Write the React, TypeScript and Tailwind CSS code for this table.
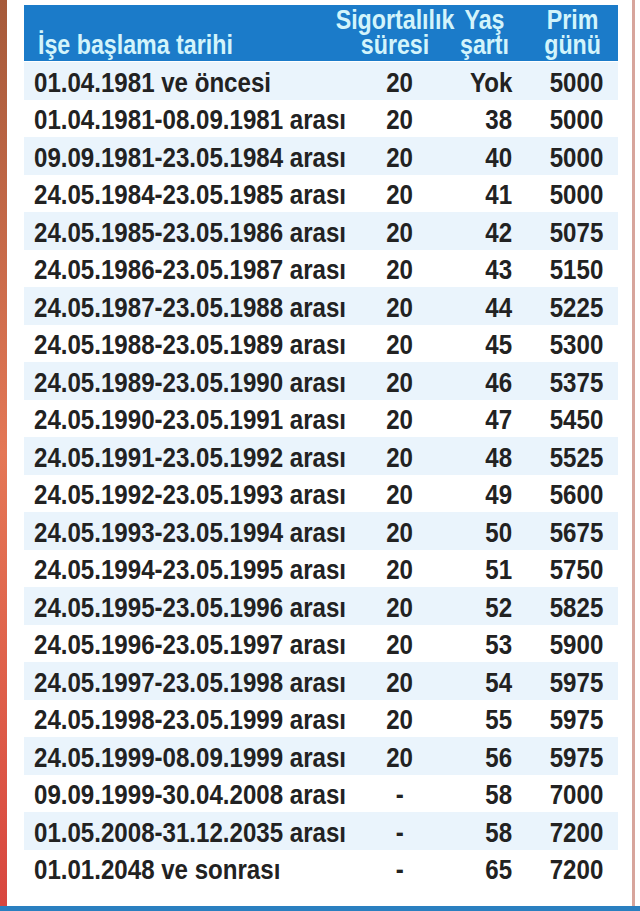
const rows: [string, string, string, string][] = [
  ["01.04.1981 ve öncesi", "20", "Yok", "5000"],
  ["01.04.1981-08.09.1981 arası", "20", "38", "5000"],
  ["09.09.1981-23.05.1984 arası", "20", "40", "5000"],
  ["24.05.1984-23.05.1985 arası", "20", "41", "5000"],
  ["24.05.1985-23.05.1986 arası", "20", "42", "5075"],
  ["24.05.1986-23.05.1987 arası", "20", "43", "5150"],
  ["24.05.1987-23.05.1988 arası", "20", "44", "5225"],
  ["24.05.1988-23.05.1989 arası", "20", "45", "5300"],
  ["24.05.1989-23.05.1990 arası", "20", "46", "5375"],
  ["24.05.1990-23.05.1991 arası", "20", "47", "5450"],
  ["24.05.1991-23.05.1992 arası", "20", "48", "5525"],
  ["24.05.1992-23.05.1993 arası", "20", "49", "5600"],
  ["24.05.1993-23.05.1994 arası", "20", "50", "5675"],
  ["24.05.1994-23.05.1995 arası", "20", "51", "5750"],
  ["24.05.1995-23.05.1996 arası", "20", "52", "5825"],
  ["24.05.1996-23.05.1997 arası", "20", "53", "5900"],
  ["24.05.1997-23.05.1998 arası", "20", "54", "5975"],
  ["24.05.1998-23.05.1999 arası", "20", "55", "5975"],
  ["24.05.1999-08.09.1999 arası", "20", "56", "5975"],
  ["09.09.1999-30.04.2008 arası", "-", "58", "7000"],
  ["01.05.2008-31.12.2035 arası", "-", "58", "7200"],
  ["01.01.2048 ve sonrası", "-", "65", "7200"],
];

const font = {
  fontFamily: '"Liberation Sans", Arial, sans-serif',
};

export default function App() {
  return (
    <div className="flex h-[911px] w-[640px] flex-col bg-white" style={font}>
      <div className="flex flex-1">
        {/* Left edge strip */}
        <div className="w-[7px] bg-gradient-to-b from-[#a55a3a] via-[#e47756] to-[#d8463f]" />

        {/* Table */}
        <div className="ml-[17px] mt-[5px] w-[594px]">
          {/* Header */}
          <div className="flex h-[56px] items-end bg-[#1b7bc9] pb-[3px] text-[27px] font-bold leading-[25px] text-[#d3f4fb]">
            <div className="w-[356px] pl-[14px]">
              <span className="inline-block origin-left scale-x-[0.86] whitespace-nowrap">
                İşe başlama tarihi
              </span>
            </div>
            <div className="flex w-[30px] justify-center">
              <div className="origin-center scale-x-[0.86] whitespace-nowrap text-center">
                Sigortalılık
                <br />
                süresi
              </div>
            </div>
            <div className="flex w-[99px] justify-end">
              <div className="origin-right scale-x-[0.86] text-center">
                Yaş
                <br />
                şartı
              </div>
            </div>
            <div className="flex w-[92px] justify-end">
              <div className="origin-right scale-x-[0.86] text-center">
                Prim
                <br />
                günü
              </div>
            </div>
          </div>

          {/* Rows */}
          <div className="mt-[1px]">
            {rows.map((r, i) => (
              <div
                key={i}
                className={`flex h-[37.5px] items-center pt-[4px] text-[28px] font-bold text-[#222222] ${
                  i % 2 === 0 ? "bg-[#eaf4fc]" : "bg-white"
                }`}
              >
                <div className="w-[356px] pl-[10px]">
                  <span className="inline-block origin-left scale-x-[0.86] whitespace-nowrap">
                    {r[0]}
                  </span>
                </div>
                <div className="w-[40px] text-center">
                  <span className="inline-block origin-center scale-x-[0.86]">{r[1]}</span>
                </div>
                <div className="w-[92px] text-right">
                  <span className="inline-block origin-right scale-x-[0.86]">{r[2]}</span>
                </div>
                <div className="w-[91px] text-right">
                  <span className="inline-block origin-right scale-x-[0.86]">{r[3]}</span>
                </div>
              </div>
            ))}
          </div>
        </div>

        {/* Right edge line */}
        <div className="ml-[14px] w-[3px] bg-[#d7a59c]" />
      </div>

      {/* Bottom line */}
      <div className="h-[5px] bg-[#2a7fc0]" />
    </div>
  );
}
